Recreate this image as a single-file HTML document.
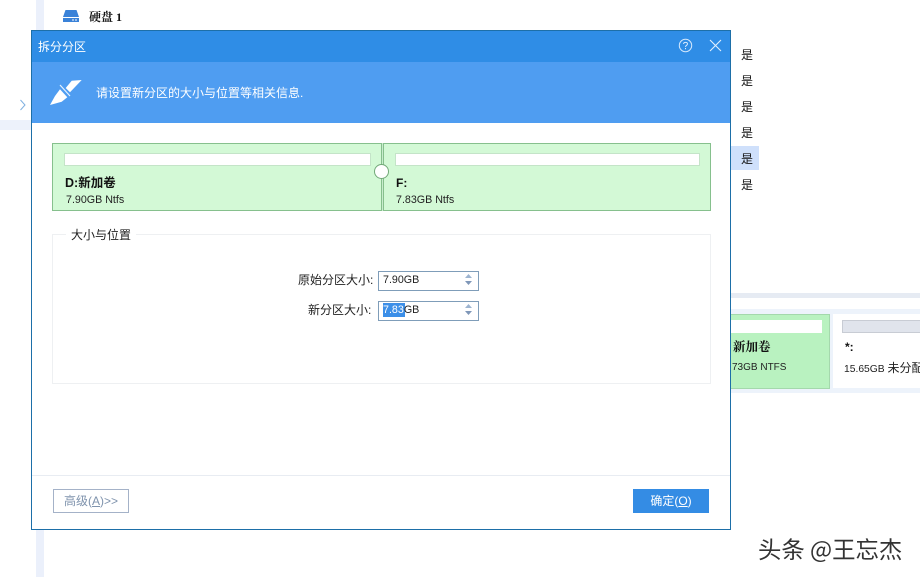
<!DOCTYPE html>
<html lang="zh">
<head>
<meta charset="utf-8">
<style>
html,body{margin:0;padding:0;background:#fff}
#p{position:relative;width:920px;height:577px;overflow:hidden;background:#fff;font-family:"Liberation Sans","Noto Sans CJK SC",sans-serif;font-size:12px;color:#222}
#p div,#p svg{position:absolute}
.t{white-space:nowrap;line-height:14px}
.shi{left:741px;width:12px;height:14px;font-size:12px;line-height:14px;color:#111;font-family:"WenQuanYi Zen Hei","Noto Sans CJK SC",sans-serif}
.card{top:143px;height:66px;background:#d3f9d6;border:1px solid #86c08d}
.bar{height:11px;background:#fff;border:1px solid #c4e4c8}
.spin{left:378px;width:99px;height:18px;background:#fff;border:1px solid #7f9db9}
</style>
</head>
<body>
<div id="p">
  <!-- background app -->
  <div style="left:36px;top:0;width:8px;height:577px;background:#ebf0fb"></div>
  <div style="left:0;top:120px;width:31px;height:10px;background:#edf2fb"></div>
  <svg style="left:18px;top:99px" width="9" height="12" viewBox="0 0 9 12"><path d="M2.500 1l4.500 5-4.500 5" fill="none" stroke="#7fb0e0" stroke-width="1"/></svg>
  <svg style="left:62px;top:10px" width="18" height="13" viewBox="0 0 18 13"><path d="M3.500 0H14.500L17 7H1Z" fill="#3a82d8"/><rect x="1" y="8" width="16" height="4" fill="#3a82d8"/><rect x="10" y="9.500" width="2" height="1" fill="#fff"/><rect x="13" y="9.500" width="2" height="1" fill="#fff"/></svg>
  <div class="t" style="left:89px;top:10px;font-weight:bold;color:#111;font-size:12px;font-family:'Liberation Serif','Noto Serif CJK SC',serif">硬盘 1</div>

  <div class="shi" style="left:731px;top:146px;width:28px;height:24px;background:#cfe0fb"></div>
  <div class="shi" style="top:48px">是</div>
  <div class="shi" style="top:74px">是</div>
  <div class="shi" style="top:100px">是</div>
  <div class="shi" style="top:126px">是</div>
  <div class="shi" style="top:152px">是</div>
  <div class="shi" style="top:178px">是</div>

  <div style="left:731px;top:293px;width:189px;height:5px;background:#e6ebf3"></div>
  <div style="left:731px;top:309px;width:189px;height:84px;background:#edf3fb"></div>
  <div style="left:731px;top:314px;width:98px;height:73px;background:#b9f2c0;border:1px solid #a4d8ac;border-left:0"></div>
  <div style="left:731px;top:320px;width:91px;height:13px;background:#fff"></div>
  <div class="t" style="left:733px;top:340px;font-weight:bold;font-size:12.500px;color:#111;font-family:'Liberation Serif','Noto Serif CJK SC',serif">新加卷</div>
  <div class="t" style="left:732px;top:361px;font-size:10px;color:#222">73GB NTFS</div>
  <div style="left:833px;top:314px;width:87px;height:74px;background:#fff"></div>
  <div style="left:842px;top:320px;width:78px;height:11px;background:#e0e4ec;border:1px solid #c8ccd4;border-right:0"></div>
  <div class="t" style="left:845px;top:340px;font-weight:bold;font-size:12px;color:#111">*:</div>
  <div class="t" style="left:844px;top:361px;font-size:10.300px;color:#222">15.65GB <span style="font-size:12px">未分配</span></div>

  <div class="t" style="left:758px;top:535px;font-size:23.400px;line-height:26px;color:#333;font-family:'Noto Sans CJK SC',sans-serif">头条 @王忘杰</div>

  <!-- dialog -->
  <div style="left:31px;top:30px;width:698px;height:498px;background:#fff;border:1px solid #1d6fa8"></div>
  <div style="left:32px;top:31px;width:698px;height:31px;background:#2f8de6"></div>
  <div style="left:32px;top:62px;width:698px;height:61px;background:#4f9df1"></div>
  <div class="t" style="left:38px;top:40px;color:#fff;font-size:12px">拆分分区</div>
  <svg style="left:678px;top:38px" width="15" height="15" viewBox="0 0 15 15"><circle cx="7.500" cy="7.500" r="6.200" fill="none" stroke="#d8eafc" stroke-width="1"/><path d="M5.600 6C5.600 3.800 9.500 3.800 9.500 6C9.500 7.400 7.500 7.300 7.500 9" fill="none" stroke="#d8eafc" stroke-width="1"/><rect x="7" y="10" width="1" height="1.200" fill="#d8eafc"/></svg>
  <svg style="left:709px;top:39px" width="13" height="13" viewBox="0 0 13 13"><path d="M1 1L12 12M12 1L1 12" stroke="#e2f0fd" stroke-width="1.100"/></svg>
  <svg style="left:40px;top:60px" width="50" height="50" viewBox="0 0 50 50"><path d="M41.700 20L31.700 20.700 25.700 28 30 32.300Z" fill="#fff"/><path d="M10 45L15 36 20 29.300 27.300 37.300 21.700 41.700Z" fill="#fff"/><path d="M20 25L30 36" stroke="#e6f2fe" stroke-width="1.200"/></svg>
  <div class="t" style="left:96px;top:86px;color:#fff;font-size:12px">请设置新分区的大小与位置等相关信息.</div>

  <!-- partition cards -->
  <div class="card" style="left:52px;width:328px"></div>
  <div style="left:382px;top:143px;width:1px;height:68px;background:#c9ecce"></div>
  <div class="card" style="left:383px;width:326px"></div>
  <div class="bar" style="left:64px;top:153px;width:305px"></div>
  <div class="bar" style="left:395px;top:153px;width:303px"></div>
  <div style="left:374px;top:164px;width:13px;height:13px;border-radius:50%;background:#fff;border:1px solid #72a878"></div>
  <div class="t" style="left:65px;top:176px;font-weight:bold;color:#111;font-size:12.500px">D:新加卷</div>
  <div class="t" style="left:66px;top:192.500px;font-size:10.700px;color:#222">7.90GB Ntfs</div>
  <div class="t" style="left:396px;top:176px;font-weight:bold;color:#111;font-size:12px">F:</div>
  <div class="t" style="left:396px;top:192.500px;font-size:10.700px;color:#222">7.83GB Ntfs</div>

  <!-- group -->
  <div style="left:52px;top:234px;width:657px;height:148px;border:1px solid #eef0f2"></div>
  <div class="t" style="left:66px;top:228px;background:#fff;padding:0 5px;color:#222;font-size:12px">大小与位置</div>
  <div class="t" style="left:298px;top:273px;font-size:12px;color:#222">原始分区大小:</div>
  <div class="t" style="left:308px;top:303px;font-size:12px;color:#222">新分区大小:</div>
  <div class="spin" style="top:271px"></div>
  <div class="spin" style="top:301px"></div>
  <div class="t" style="left:383px;top:273px;font-size:10.700px;color:#222">7.90GB</div>
  <div style="left:383px;top:303px;width:22px;height:14px;background:#3c8fe8"></div>
  <div class="t" style="left:383px;top:303px;font-size:10.700px;color:#222"><span style="color:#fff">7.83</span>GB</div>
  <svg style="left:464px;top:274px" width="9" height="11" viewBox="0 0 9 11"><path d="M4.500 0L8 4H1Z" fill="#9db4d0"/><path d="M4.500 11L8 7H1Z" fill="#7f97b8"/></svg>
  <svg style="left:464px;top:304px" width="9" height="11" viewBox="0 0 9 11"><path d="M4.500 0L8 4H1Z" fill="#9db4d0"/><path d="M4.500 11L8 7H1Z" fill="#7f97b8"/></svg>

  <!-- footer -->
  <div style="left:32px;top:475px;width:698px;height:1px;background:#e8ecf2"></div>
  <div class="t" style="left:53px;top:489px;width:74px;height:22px;border:1px solid #a4b2c8;line-height:22px;text-align:center;color:#7f93ad;font-size:12px;background:#fff">高级(<u>A</u>)&gt;&gt;</div>
  <div class="t" style="left:633px;top:489px;width:76px;height:24px;background:#348ce4;line-height:24px;text-align:center;color:#fff;font-size:12px">确定(<u>O</u>)</div>
</div>
</body>
</html>
